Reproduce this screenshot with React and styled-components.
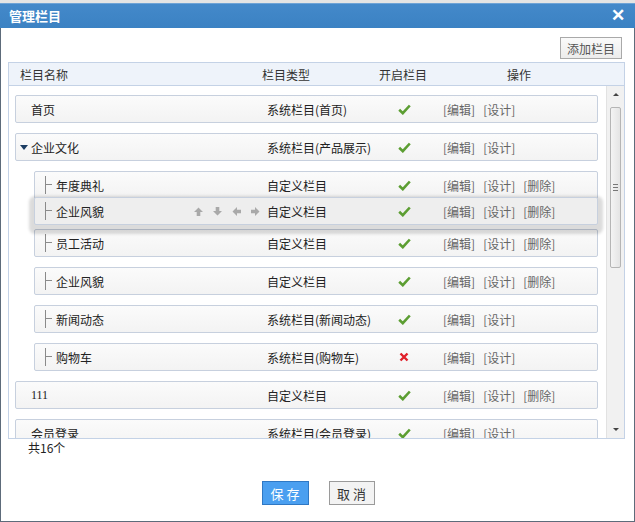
import React from "react";
import styled, { createGlobalStyle } from "styled-components";

const GlobalStyle = createGlobalStyle`
  html, body {
    margin: 0;
    padding: 0;
    background: #e9e9e9;
    font-family: "Noto Sans CJK SC", "Liberation Sans", sans-serif;
    font-size: 12px;
    color: #222;
  }
`;

const Page = styled.div`
  width: 635px;
  height: 522px;
  padding-top: 3px;
  box-sizing: border-box;
  background: #e4e4e4;
`;

const Window = styled.div`
  height: 519px;
  display: flex;
  flex-direction: column;
  background: #fff;
  border: 1px solid #5d6b7a;
  border-top: none;
  box-sizing: border-box;
`;

const TitleBar = styled.div`
  height: 25px;
  flex: none;
  display: flex;
  align-items: center;
  justify-content: space-between;
  padding: 0 10px 0 9px;
  margin: 0 -1px;
  background: linear-gradient(#4489ca, #3b82c3);
  box-shadow: inset 0 1px 0 #6ea3d6;
  color: #fff;
  font-size: 13px;
  font-weight: bold;
`;

const CloseX = styled.span`
  font-family: "Liberation Sans", sans-serif;
  font-size: 17px;
  font-weight: bold;
  line-height: 1;
`;

const Body = styled.div`
  flex: 1;
  padding: 0 9px 0 7px;
  display: flex;
  flex-direction: column;
`;

const Toolbar = styled.div`
  display: flex;
  justify-content: flex-end;
  padding: 9px 3px 3px 0;
`;

const GrayButton = styled.button`
  height: 22px;
  padding: 0 6px;
  border: 1px solid #a9a9a9;
  background: linear-gradient(#fafafa, #ececec);
  color: #555;
  font-family: inherit;
  font-size: 12px;
  cursor: pointer;
`;

const Table = styled.div`
  border: 1px solid #c4d2e6;
  display: flex;
  flex-direction: column;
`;

const HeaderRow = styled.div`
  height: 22px;
  display: flex;
  align-items: center;
  padding-left: 11px;
  background: #eef3fa;
  border-bottom: 1px solid #c4d2e6;
  color: #333;
`;

const HeadCell = styled.div`
  width: ${p => p.$w}px;
  flex: none;
`;

const ScrollArea = styled.div`
  height: 352px;
  display: flex;
`;

const List = styled.div`
  flex: 1;
  overflow: hidden;
  padding: 9px 8px 0 6px;
  display: flex;
  flex-direction: column;
`;

const Row = styled.div`
  position: relative;
  z-index: ${p => (p.$drag ? 2 : 1)};
  flex: none;
  height: 28px;
  box-sizing: border-box;
  margin-left: ${p => (p.$level ? 19 : 0)}px;
  margin-bottom: ${p => p.$mb}px;
  padding-left: ${p => (p.$level ? 10 : 4)}px;
  display: flex;
  align-items: center;
  border: 1px solid #c7d0de;
  border-radius: 2px;
  background: ${p => (p.$drag ? "#eeeeee" : "linear-gradient(#fbfbfb, #f3f3f3)")};
  box-shadow: ${p => (p.$drag ? "0 4px 3px 5px rgba(0,0,0,0.14)" : "none")};
`;

const Toggle = styled.span`
  width: 11px;
  flex: none;
  display: flex;
  align-items: center;
  &::before {
    content: "";
    display: ${p => (p.$open ? "block" : "none")};
    border-top: 5px solid #1c3d63;
    border-left: 4px solid transparent;
    border-right: 4px solid transparent;
  }
`;

const Branch = styled.span`
  position: relative;
  width: 11px;
  height: 18px;
  flex: none;
  border-left: 1px solid #8a8a8a;
  box-sizing: border-box;
  &::after {
    content: "";
    position: absolute;
    left: 0;
    top: 8px;
    width: 6px;
    border-top: 1px solid #8a8a8a;
  }
`;

const NameCell = styled.div`
  width: ${p => p.$w}px;
  flex: none;
  display: flex;
  align-items: center;
`;

const NameText = styled.span`
  font-family: ${p => (p.$num ? '"Liberation Serif", serif' : "inherit")};
`;

const MoveIcons = styled.span`
  margin-left: auto;
  margin-right: 7px;
  display: flex;
  gap: 10px;
`;

const TypeCell = styled.div`
  width: 130px;
  flex: none;
`;

const CheckCell = styled.div`
  width: 14px;
  margin-right: 32px;
  flex: none;
  display: flex;
  align-items: center;
  justify-content: center;
`;

const Ops = styled.div`
  display: flex;
  gap: 8px;
  color: #666;
`;

const Scrollbar = styled.div`
  width: 17px;
  flex: none;
  display: flex;
  flex-direction: column;
  align-items: center;
  background: #f1f1f1;
  border-left: 1px solid #e2e2e2;
`;

const ScrollArrow = styled.div`
  height: 17px;
  flex: none;
  display: flex;
  align-items: center;
  justify-content: center;
  &::before {
    content: "";
    border-left: 3px solid transparent;
    border-right: 3px solid transparent;
    ${p => (p.$down ? "border-top: 3px solid #444;" : "border-bottom: 3px solid #444;")}
  }
`;

const Thumb = styled.div`
  width: 11px;
  height: 161px;
  margin-top: 4px;
  box-sizing: border-box;
  border: 1px solid #b5b5b5;
  border-radius: 2px;
  background: linear-gradient(90deg, #f4f4f4, #e4e4e4);
  display: flex;
  flex-direction: column;
  align-items: center;
  justify-content: center;
  gap: 2px;
  & > i {
    display: block;
    width: 5px;
    border-top: 1px solid #777;
  }
`;

const Spacer = styled.div`
  flex: 1;
`;

const Count = styled.div`
  padding: 0 0 0 20px;
  color: #222;
`;

const Footer = styled.div`
  display: flex;
  justify-content: center;
  gap: 20px;
  margin-top: 25px;
  padding-left: 3px;
`;

const BlueButton = styled.button`
  width: 47px;
  height: 24px;
  border: 1px solid #2f78c4;
  background: #4a9ff0;
  color: #fff;
  font-family: inherit;
  font-size: 13px;
  letter-spacing: 3px;
  padding: 0 0 0 3px;
  cursor: pointer;
`;

const CancelButton = styled(GrayButton)`
  width: 46px;
  height: 24px;
  padding: 0 0 0 3px;
  border-color: #9a9a9a;
  color: #333;
  font-size: 13px;
  letter-spacing: 3px;
  background: #f3f3f3;
`;

const Check = () => (
  <svg width="13" height="11" viewBox="0 0 13 11">
    <path d="M1.2 5.8 L4.8 9.2 L11.8 1.5" fill="none" stroke="#5c9e32" strokeWidth="2.6" />
  </svg>
);

const Cross = () => (
  <svg width="10" height="10" viewBox="0 0 10 10">
    <path d="M1.5 1.5 L8.5 8.5 M8.5 1.5 L1.5 8.5" stroke="#e0202a" strokeWidth="2.4" />
  </svg>
);

const arrows = {
  up: "4.5,0.5 9,5 6.3,5 6.3,9 2.7,9 2.7,5 0,5",
  down: "4.5,8.5 9,4 6.3,4 6.3,0 2.7,0 2.7,4 0,4",
  left: "0.5,4.5 5,0 5,2.7 9,2.7 9,6.3 5,6.3 5,9",
  right: "8.5,4.5 4,0 4,2.7 0,2.7 0,6.3 4,6.3 4,9",
};

const Arrow = ({ dir }) => (
  <svg width="9" height="9" viewBox="0 0 9 9">
    <polygon points={arrows[dir]} fill="#a9a9a9" />
  </svg>
);

const rows = [
  { name: "首页", type: "系统栏目(首页)", on: true, level: 0 },
  { name: "企业文化", type: "系统栏目(产品展示)", on: true, level: 0, open: true },
  { name: "年度典礼", type: "自定义栏目", on: true, del: true, level: 1, mb: -2 },
  { name: "企业风貌", type: "自定义栏目", on: true, del: true, level: 1, drag: true, mb: 4 },
  { name: "员工活动", type: "自定义栏目", on: true, del: true, level: 1 },
  { name: "企业风貌", type: "自定义栏目", on: true, del: true, level: 1 },
  { name: "新闻动态", type: "系统栏目(新闻动态)", on: true, level: 1 },
  { name: "购物车", type: "系统栏目(购物车)", on: false, level: 1 },
  { name: "111", type: "自定义栏目", on: true, del: true, level: 0 },
  { name: "会员登录", type: "系统栏目(会员登录)", on: true, level: 0 },
];

export default function App() {
  return (
    <Page>
      <GlobalStyle />
      <Window>
        <TitleBar>
          <span>管理栏目</span>
          <CloseX>✕</CloseX>
        </TitleBar>
        <Body>
          <Toolbar>
            <GrayButton>添加栏目</GrayButton>
          </Toolbar>
          <Table>
            <HeaderRow>
              <HeadCell $w={242}>栏目名称</HeadCell>
              <HeadCell $w={117}>栏目类型</HeadCell>
              <HeadCell $w={128}>开启栏目</HeadCell>
              <HeadCell $w={40}>操作</HeadCell>
            </HeaderRow>
            <ScrollArea>
              <List>
                {rows.map((r, i) => (
                  <Row key={i} $level={r.level} $drag={r.drag} $mb={r.mb ?? 10}>
                    {r.level ? <Branch /> : <Toggle $open={r.open} />}
                    <NameCell $w={r.level ? 211 : 236}>
                      <NameText $num={/^\d+$/.test(r.name)}>{r.name}</NameText>
                      {r.drag && (
                        <MoveIcons>
                          <Arrow dir="up" />
                          <Arrow dir="down" />
                          <Arrow dir="left" />
                          <Arrow dir="right" />
                        </MoveIcons>
                      )}
                    </NameCell>
                    <TypeCell>{r.type}</TypeCell>
                    <CheckCell>{r.on ? <Check /> : <Cross />}</CheckCell>
                    <Ops>
                      <span>[编辑]</span>
                      <span>[设计]</span>
                      {r.del && <span>[删除]</span>}
                    </Ops>
                  </Row>
                ))}
              </List>
              <Scrollbar>
                <ScrollArrow />
                <Thumb>
                  <i />
                  <i />
                  <i />
                </Thumb>
                <Spacer />
                <ScrollArrow $down />
              </Scrollbar>
            </ScrollArea>
          </Table>
          <Count>共16个</Count>
          <Footer>
            <BlueButton>保存</BlueButton>
            <CancelButton>取消</CancelButton>
          </Footer>
        </Body>
      </Window>
    </Page>
  );
}
